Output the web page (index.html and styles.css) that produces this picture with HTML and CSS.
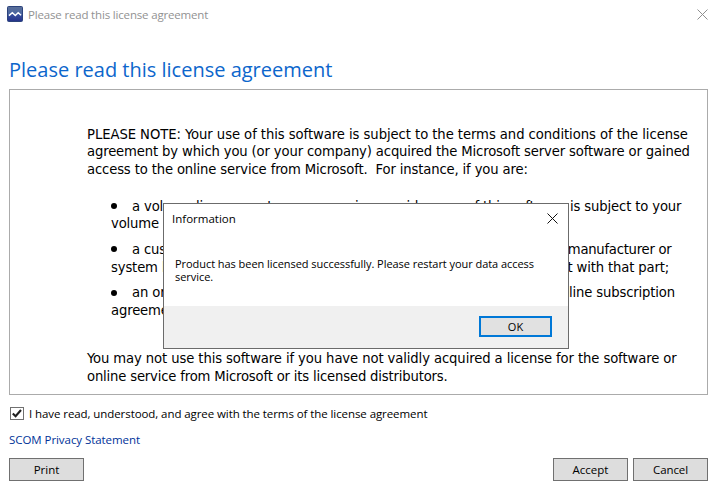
FILE: index.html
```
<!DOCTYPE html>
<html lang="en">
<head>
<meta charset="utf-8">
<title>Please read this license agreement</title>
<link rel="stylesheet" href="styles.css">
</head>
<body>
<div class="window">
  <header class="titlebar">
    <svg class="app-icon" width="16" height="16" viewBox="0 0 16 16">
      <defs>
        <linearGradient id="sky" x1="0" y1="0" x2="0" y2="1"><stop offset="0" stop-color="#5a6f98"/><stop offset="1" stop-color="#3a5cab"/></linearGradient>
        <linearGradient id="ground" x1="0" y1="0" x2="0" y2="1"><stop offset="0" stop-color="#3c57a4"/><stop offset="1" stop-color="#26348a"/></linearGradient>
      </defs>
      <rect x=".5" y=".5" width="15" height="15" rx="1" fill="url(#sky)" stroke="#2c437c"/>
      <path d="M1 10L5.5 6.5L8.5 9.5L11.5 6.5L15 10V15H1Z" fill="url(#ground)"/>
      <path d="M2 9.6L5.3 6.8L8.3 9.6L11.2 6.8L14 9.3" fill="none" stroke="#fff" stroke-width="1.4"/>
    </svg>
    <span class="title">Please read this license agreement</span>
    <svg class="close" width="11" height="11" viewBox="0 0 11 11"><path d="M.5 .5L10.5 10.5M10.5 .5L.5 10.5"/></svg>
  </header>
  <h1>Please read this license agreement</h1>
  <section class="license">
    <p class="wide">PLEASE NOTE: Your use of this software is subject to the terms and conditions of the license</p>
    <p>agreement by which you (or your company) acquired the Microsoft server software or gained</p>
    <p>access to the online service from Microsoft.&nbsp; For instance, if you are:</p>
    <ul>
      <li>
        <p class="first">a volume license customer or service provider, use of this software is subject to your</p>
        <p>volume</p>
      </li>
      <li>
        <p class="first split"><span>a cus</span><span class="end-a">manufacturer or</span></p>
        <p class="split"><span>system b</span><span class="end-b">t with that part;</span></p>
      </li>
      <li>
        <p class="first split"><span>an or</span><span class="end-c">nline subscription</span></p>
        <p>agreeme</p>
      </li>
    </ul>
    <p class="mid">You may not use this software if you have not validly acquired a license for the software or</p>
    <p class="tight">online service from Microsoft or its licensed distributors.</p>
  </section>
  <label class="consent">
    <svg class="check" width="14" height="14" viewBox="0 0 14 14"><rect x=".5" y=".5" width="13" height="12" fill="#fff" stroke="#707070"/><path d="M2.8 6.4L5.6 9.2L11 3" fill="none" stroke="#212121" stroke-width="2.1"/></svg>
    <span>I have read, understood, and agree with the terms of the license agreement</span>
  </label>
  <a class="privacy">SCOM Privacy Statement</a>
  <footer class="actions">
    <button class="btn print">Print</button>
    <button class="btn">Accept</button>
    <button class="btn cancel">Cancel</button>
  </footer>
</div>
<div class="dialog">
  <div class="dialog-title">
    <span>Information</span>
    <svg class="close dark" width="11" height="11" viewBox="0 0 11 11"><path d="M.5 .5L10.5 10.5M10.5 .5L.5 10.5"/></svg>
  </div>
  <div class="message">Product has been licensed successfully. Please restart your data access<br>service.</div>
  <div class="dialog-footer"><button class="ok">OK</button></div>
</div>
</body>
</html>
```
FILE: styles.css
```
* { box-sizing: border-box; }
body {
  margin: 0;
  background: #fff;
  color: #000;
  font: 11.5px/16px "Open Sans", "Noto Sans", sans-serif;
}
p, ul, h1 { margin: 0; padding: 0; }
svg { display: block; flex: none; }
.window {
  width: 716px;
  height: 490px;
  padding: 0 8px 0 9px;
  display: flex;
  flex-direction: column;
  overflow: hidden;
}
.titlebar {
  height: 28px;
  margin-left: -2px;
  display: flex;
  align-items: center;
}
.title {
  margin: 2px 0 0 5px;
  color: #929292;
  letter-spacing: -.17px;
}
.close { margin-left: auto; fill: none; stroke: #8f8f8f; }
.close.dark { stroke: #111; }
h1 {
  height: 28px;
  margin-top: 28px;
  font-size: 20px;
  line-height: 28px;
  font-weight: 400;
  color: #0c66cc;
}
.license {
  height: 306px;
  margin-top: 5px;
  border: 1px solid #ababab;
  padding: 34.5px 0 0 77px;
  font: 14.67px/17.67px "DejaVu Sans Condensed", Tahoma, sans-serif;
  letter-spacing: -.14px;
  white-space: nowrap;
}
.license ul { margin: 19px 0 30.5px 24px; list-style: none; }
.license li + li { margin-top: 8px; }
.license .wide { letter-spacing: -.06px; }
.license .mid { letter-spacing: -.1px; }
.license .tight { letter-spacing: -.17px; }
.license .first { display: flex; align-items: center; }
.license .first::before {
  content: "";
  width: 6px;
  height: 6px;
  margin: 1px 15px 0 0;
  border-radius: 50%;
  background: #000;
}
.split { display: flex; justify-content: space-between; }
.license .first.split span:first-child { margin-right: auto; }
.end-a { margin-right: 35.5px; letter-spacing: -.25px; }
.end-b { margin-right: 38px; }
.end-c { margin-right: 32px; }
.consent {
  height: 17px;
  margin: 10px 0 0 1px;
  display: flex;
  align-items: center;
  gap: 5px;
  letter-spacing: -.08px;
}
.privacy { margin-top: 10px; color: #003399; letter-spacing: -.06px; }
.actions { display: flex; gap: 5px; margin-top: 10px; }
.btn {
  width: 75px;
  height: 23px;
  padding: 0;
  border: 1px solid #707070;
  border-radius: 0;
  background: #ddd;
  font: inherit;
  line-height: 21px;
  color: #000;
}
.print { margin-right: auto; }
.cancel { letter-spacing: -.1px; }
.dialog {
  position: absolute;
  left: 163px;
  top: 203px;
  width: 406px;
  height: 146px;
  border: 1px solid #6b6b6b;
  background: #fff;
  display: flex;
  flex-direction: column;
}
.dialog-title {
  height: 29px;
  padding: 0 10px 0 8px;
  display: flex;
  align-items: center;
}
.message {
  flex: 1;
  padding: 24px 0 0 11px;
  font-size: 11px;
  line-height: 13px;
  letter-spacing: -.05px;
}
.dialog-footer {
  height: 42px;
  padding: 10px 16px 0 0;
  background: #f0f0f0;
  display: flex;
  justify-content: flex-end;
}
.ok {
  width: 73px;
  height: 21px;
  padding: 0;
  border: 2px solid #0078d7;
  border-radius: 0;
  background: #e1e1e1;
  font: 11px/17px "Open Sans", sans-serif;
  color: #000;
}
```
